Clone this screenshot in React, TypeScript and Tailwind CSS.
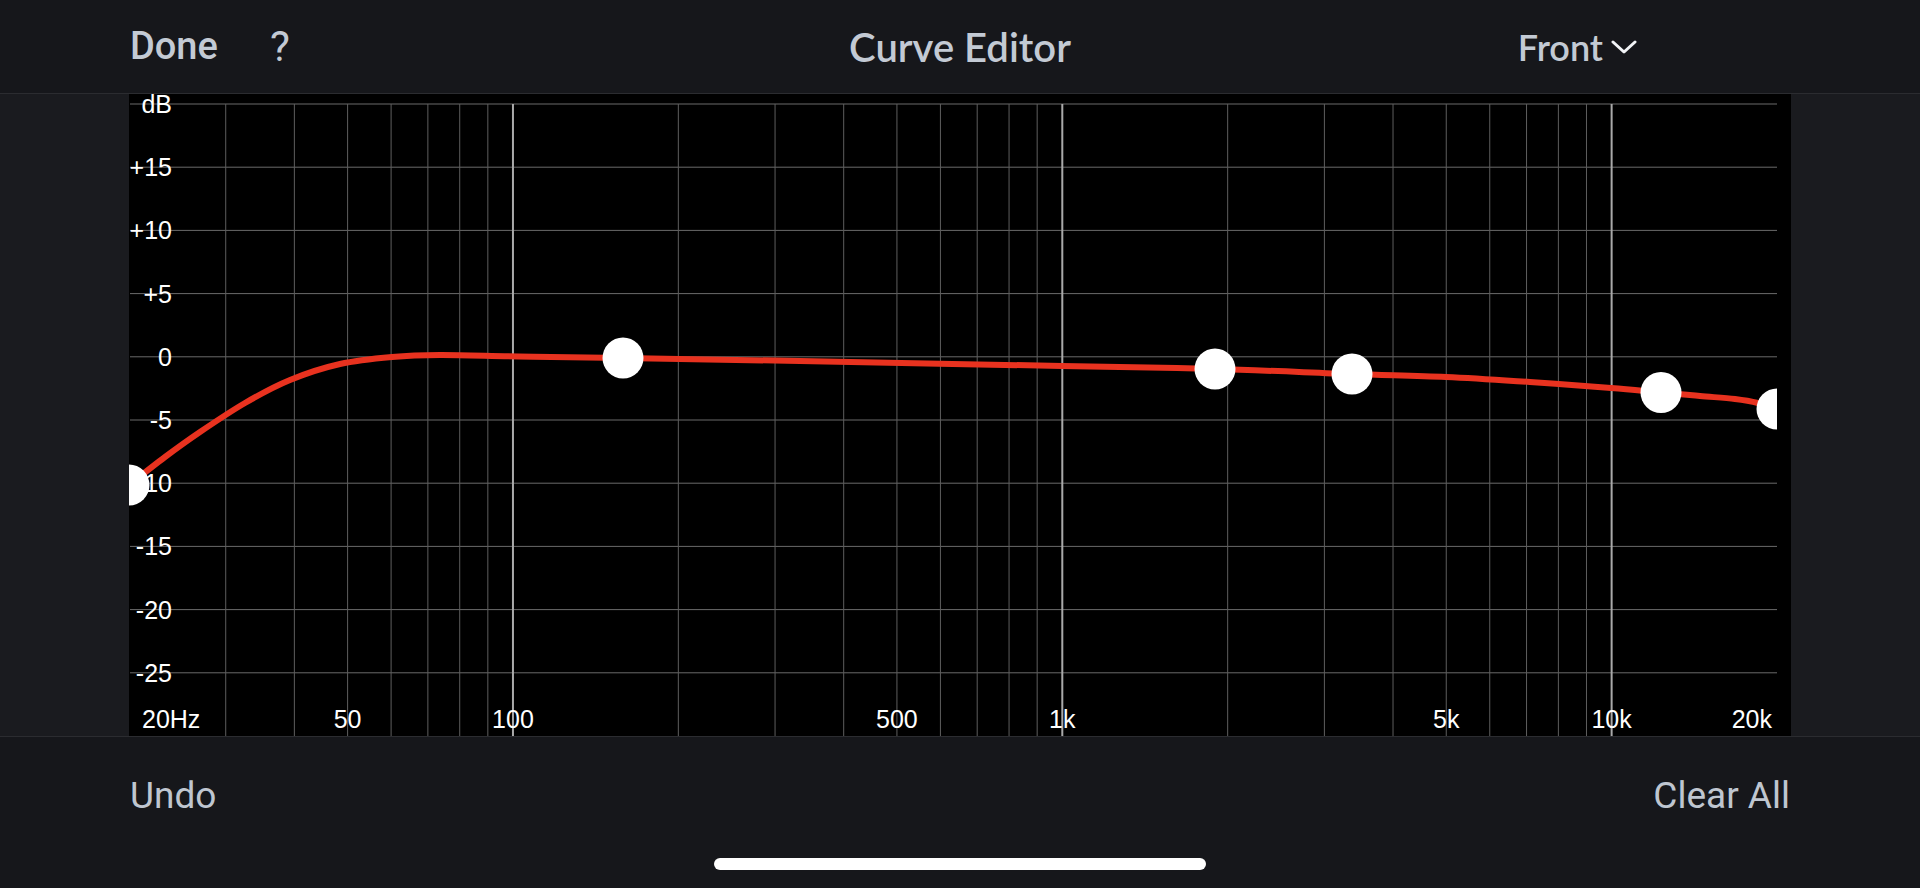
import React from "react";

const W = 1648;
const H = 642;
const X = (f: number) => 549.33 * Math.log10(f / 20);
const Y = (db: number) => 10 + (20 - db) * 12.64;

const minor = [30, 40, 50, 60, 70, 80, 90, 200, 300, 400, 500, 600, 700, 800, 900, 2000, 3000, 4000, 5000, 6000, 7000, 8000, 9000];
const decades = [100, 1000, 10000];
const dbLines = [20, 15, 10, 5, 0, -5, -10, -15, -20, -25];
const dbLabels = ["dB", "+15", "+10", "+5", "0", "-5", "-10", "-15", "-20", "-25"];
const hzLabels: [string, number][] = [["50", 50], ["100", 100], ["500", 500], ["1k", 1000], ["5k", 5000], ["10k", 10000]];

// curve samples in page px, shifted into the svg box
const pts: [number, number][] = [
  [129, 486], [165, 458], [200, 433], [245, 404], [290, 381], [340, 365],
  [392, 358], [440, 356], [519, 357.5], [623, 359], [800, 362],
  [1062, 367], [1215, 370], [1352, 375], [1446, 378], [1530, 383], [1611, 389], [1661, 393.5],
  [1700, 397], [1735, 400], [1758, 404], [1777, 410],
].map(([x, y]) => [x - 129, y - 95]);

function smooth(p: [number, number][]) {
  let d = `M${p[0][0]},${p[0][1]}`;
  for (let i = 0; i < p.length - 1; i++) {
    const a = p[i - 1] || p[i];
    const b = p[i];
    const c = p[i + 1];
    const e = p[i + 2] || c;
    const c1 = [b[0] + (c[0] - a[0]) / 6, b[1] + (c[1] - a[1]) / 6];
    const c2 = [c[0] - (e[0] - b[0]) / 6, c[1] - (e[1] - b[1]) / 6];
    d += ` C${c1[0].toFixed(1)},${c1[1].toFixed(1)} ${c2[0].toFixed(1)},${c2[1].toFixed(1)} ${c[0]},${c[1]}`;
  }
  return d;
}

const nodes: [number, number][] = [
  [0, 391], [494, 264], [1086, 275], [1223, 280], [1532, 298.5], [1648, 315],
];

function Chart() {
  return (
    <svg width={W} height={H} className="block overflow-visible shrink-0" style={{ fontFamily: '"Liberation Sans", Arial, sans-serif' }}>
      <defs>
        <clipPath id="plot">
          <rect x={0} y={0} width={W} height={H} />
        </clipPath>
      </defs>
      {dbLines.map((db) => (
        <line key={db} x1={1} x2={W} y1={Y(db)} y2={Y(db)} stroke="#6a6a6a" strokeWidth={1} />
      ))}
      {minor.map((f) => (
        <line key={f} x1={X(f)} x2={X(f)} y1={Y(20)} y2={H} stroke="#5e5e5e" strokeWidth={1} />
      ))}
      {decades.map((f) => (
        <line key={f} x1={X(f)} x2={X(f)} y1={Y(20)} y2={H} stroke="#a9a9a9" strokeWidth={2} />
      ))}
      {dbLabels.map((t, i) => (
        <text key={t} x={43} y={Y(dbLines[i]) + 9} fill="#fff" fontSize={25} textAnchor="end">
          {t}
        </text>
      ))}
      <text x={13} y={634} fill="#fff" fontSize={25}>20Hz</text>
      {hzLabels.map(([t, f]) => (
        <text key={t} x={X(f)} y={634} fill="#fff" fontSize={25} textAnchor="middle">
          {t}
        </text>
      ))}
      <text x={1643} y={634} fill="#fff" fontSize={25} textAnchor="end">20k</text>
      <g clipPath="url(#plot)">
        <path d={smooth(pts as [number, number][])} fill="none" stroke="#e8321f" strokeWidth={6} strokeLinecap="round" />
        {nodes.map(([x, y], i) => (
          <circle key={i} cx={x} cy={y} r={20.5} fill="#fff" />
        ))}
      </g>
    </svg>
  );
}

export default function App() {
  return (
    <div className="w-[1920px] h-[888px] bg-[#16171b] flex flex-col overflow-hidden select-none">
      <div className="h-[94px] shrink-0 grid grid-cols-[1fr_auto_1fr] items-center border-b border-[#2b2c30] text-[#c3cad4]">
        <div className="flex items-center pl-[130px] gap-[52px]">
          <span className="font-['Roboto',sans-serif] font-medium text-[38px]">Done</span>
          <span className="font-['Roboto',sans-serif] font-normal text-[42px]">?</span>
        </div>
        <div className="font-['Lato',sans-serif] font-semibold text-[40px]">Curve Editor</div>
        <div className="flex items-center justify-end pr-[283px] gap-[8px] font-['Lato',sans-serif] font-semibold text-[36px]">
          <span>Front</span>
          <svg width="26" height="16" viewBox="0 0 26 16">
            <polyline points="2,3 13,13 24,3" fill="none" stroke="#f2f4f7" strokeWidth="3" strokeLinecap="round" strokeLinejoin="round" />
          </svg>
        </div>
      </div>
      <div className="h-[642px] shrink-0 bg-[#1a1b1f] px-[129px] flex">
        <div className="flex-1 bg-black flex">
          <Chart />
        </div>
      </div>
      <div className="flex-1 border-t border-[#2b2c30] flex flex-col">
        <div className="h-[118px] flex items-center justify-between px-[130px] font-['Roboto',sans-serif] text-[37px] text-[#bfc6d0]">
          <span>Undo</span>
          <span>Clear All</span>
        </div>
        <div className="mx-auto mt-[3px] w-[492px] h-[12px] rounded-full bg-white" />
      </div>
    </div>
  );
}
